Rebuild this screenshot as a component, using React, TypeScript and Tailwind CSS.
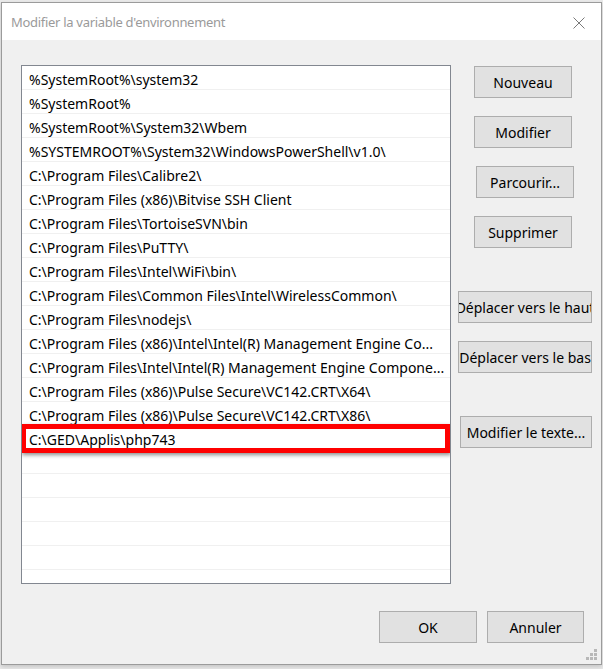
const paths = [
  "%SystemRoot%\\system32",
  "%SystemRoot%",
  "%SystemRoot%\\System32\\Wbem",
  "%SYSTEMROOT%\\System32\\WindowsPowerShell\\v1.0\\",
  "C:\\Program Files\\Calibre2\\",
  "C:\\Program Files (x86)\\Bitvise SSH Client",
  "C:\\Program Files\\TortoiseSVN\\bin",
  "C:\\Program Files\\PuTTY\\",
  "C:\\Program Files\\Intel\\WiFi\\bin\\",
  "C:\\Program Files\\Common Files\\Intel\\WirelessCommon\\",
  "C:\\Program Files\\nodejs\\",
  "C:\\Program Files (x86)\\Intel\\Intel(R) Management Engine Co...",
  "C:\\Program Files\\Intel\\Intel(R) Management Engine Compone...",
  "C:\\Program Files (x86)\\Pulse Secure\\VC142.CRT\\X64\\",
  "C:\\Program Files (x86)\\Pulse Secure\\VC142.CRT\\X86\\",
  "C:\\GED\\Applis\\php743",
];

const rows = [...paths, ...Array(6).fill("")];

function Btn({ label, className }: { label: string; className: string }) {
  return (
    <div
      className={
        "h-[32px] pt-[1px] flex items-center justify-center overflow-hidden whitespace-nowrap bg-[#e1e1e1] border border-[#adadad] text-black text-[14px] " +
        className
      }
    >
      {label}
    </div>
  );
}

export default function App() {
  return (
    <div
      className="w-[603px] h-[669px] bg-[#e9e9e9] pt-[2px] pl-[1px]"
      style={{ fontFamily: '"Noto Sans", "Open Sans", sans-serif' }}
    >
      <div className="w-[601px] h-[663px] border border-[#9b9b9b] bg-[#f0f0f0] flex flex-col shadow-[0_2px_4px_rgba(0,0,0,0.15)]">
        {/* title bar */}
        <div className="h-[37px] bg-white flex items-center justify-between pl-[9px] pr-[16px] shrink-0">
          <span className="text-[13px] tracking-[-0.3px] text-[#9a9a9a] pt-[2px]">Modifier la variable d'environnement</span>
          <svg width="12" height="12" viewBox="0 0 12 12" className="mt-[2px]">
            <path d="M0.5 0.5 L11.5 11.5 M11.5 0.5 L0.5 11.5" stroke="#7a7a7a" strokeWidth="1" />
          </svg>
        </div>

        {/* body */}
        <div className="relative flex-1 pt-[25px] pl-[19px]">
          <div className="flex">
            {/* list */}
            <div className="relative w-[430px] h-[519px] border border-[#828790] bg-white overflow-hidden">
              {rows.map((p, i) => (
                <div
                  key={i}
                  className="h-[24px] border-b border-[#f0f0f0] pl-[7px] pt-[4px] flex items-center text-[14px] text-black whitespace-nowrap"
                >
                  {p}
                </div>
              ))}
              <div className="absolute left-[-1px] top-[358px] w-[429px] h-[29px] border-[5px] border-[#ff0000] shadow-[1px_2px_4px_rgba(0,0,0,0.45)]" />
            </div>

            {/* side buttons */}
            <div className="flex flex-col items-start pt-[1px]">
              <Btn label="Nouveau" className="ml-[23px] w-[98px]" />
              <Btn label="Modifier" className="ml-[23px] w-[98px] mt-[18px]" />
              <Btn label="Parcourir..." className="ml-[25px] w-[98px] mt-[18px]" />
              <Btn label="Supprimer" className="ml-[23px] w-[98px] mt-[18px]" />
              <Btn label="Déplacer vers le haut" className="ml-[7px] w-[134px] mt-[43px]" />
              <Btn label="Déplacer vers le bas" className="ml-[7px] w-[134px] mt-[18px]" />
              <Btn label="Modifier le texte..." className="ml-[9px] w-[132px] mt-[43px]" />
            </div>
          </div>

          {/* bottom buttons */}
          <div className="flex justify-end gap-[10px] pr-[17px] mt-[27px]">
            <Btn label="OK" className="w-[98px]" />
            <Btn label="Annuler" className="w-[97px]" />
          </div>

          <svg width="12" height="12" viewBox="0 0 12 12" className="absolute right-[3px] bottom-[3px]">
            <rect x="8" y="0" width="3" height="3" fill="#b8b8b8" />
            <rect x="4" y="4" width="3" height="3" fill="#b8b8b8" />
            <rect x="8" y="4" width="3" height="3" fill="#b8b8b8" />
            <rect x="0" y="8" width="3" height="3" fill="#b8b8b8" />
            <rect x="4" y="8" width="3" height="3" fill="#b8b8b8" />
            <rect x="8" y="8" width="3" height="3" fill="#b8b8b8" />
          </svg>
        </div>
      </div>
    </div>
  );
}
